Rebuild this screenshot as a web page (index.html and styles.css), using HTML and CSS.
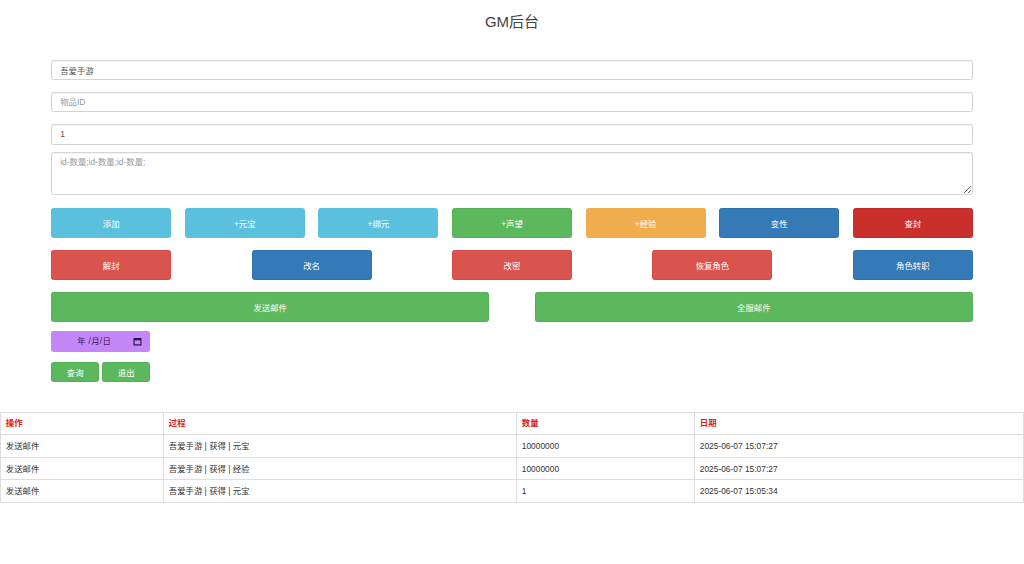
FILE: index.html
```html
<!DOCTYPE html>
<html lang="zh-CN">
<head>
<meta charset="utf-8">
<title>GM后台</title>
<link rel="stylesheet" href="styles.css">
</head>
<body>
<h3 class="title">GM后台</h3>
<div class="container">
  <input class="field" type="text" value="吾爱手游">
  <input class="field" type="text" placeholder="物品ID">
  <input class="field field-last" type="text" value="1">
  <textarea class="field area" placeholder="id-数量;id-数量;id-数量;"></textarea>

  <div class="btn-row">
    <button class="btn info">添加</button>
    <button class="btn info">+元宝</button>
    <button class="btn info">+绑元</button>
    <button class="btn success">+声望</button>
    <button class="btn warning">+经验</button>
    <button class="btn primary">变性</button>
    <button class="btn dark-danger">查封</button>
  </div>
  <div class="btn-row">
    <button class="btn danger">解封</button>
    <button class="btn primary">改名</button>
    <button class="btn danger">改密</button>
    <button class="btn danger">恢复角色</button>
    <button class="btn primary">角色转职</button>
  </div>
  <div class="btn-row">
    <button class="btn success wide">发送邮件</button>
    <button class="btn success wide">全服邮件</button>
  </div>

  <div class="date">
    <span class="date-text">年 /月/日</span>
    <svg class="cal" width="9" height="9" viewBox="0 0 9 9">
      <rect x="0.5" y="1" width="8" height="7.5" rx="0.6" fill="#2a1040"/>
      <rect x="1.6" y="3.3" width="5.8" height="4" fill="#c586f8"/>
    </svg>
  </div>

  <div class="small-row">
    <button class="btn success small">查询</button>
    <button class="btn success small">退出</button>
  </div>
</div>

<table class="log">
  <colgroup>
    <col class="c1"><col class="c2"><col class="c3"><col class="c4">
  </colgroup>
  <thead>
    <tr><th>操作</th><th>过程</th><th>数量</th><th>日期</th></tr>
  </thead>
  <tbody>
    <tr><td>发送邮件</td><td>吾爱手游 | 获得 | 元宝</td><td>10000000</td><td>2025-06-07 15:07:27</td></tr>
    <tr><td>发送邮件</td><td>吾爱手游 | 获得 | 经验</td><td>10000000</td><td>2025-06-07 15:07:27</td></tr>
    <tr><td>发送邮件</td><td>吾爱手游 | 获得 | 元宝</td><td>1</td><td>2025-06-07 15:05:34</td></tr>
  </tbody>
</table>
</body>
</html>
```

FILE: styles.css
```css
html, body {
  margin: 0;
  padding: 0;
  background: #fff;
}
body {
  font-family: "Liberation Sans", "Noto Sans CJK SC", sans-serif;
  font-size: 8.4px;
  line-height: 1.42857;
  color: #333;
}
.title {
  font-size: 15px;
  font-weight: normal;
  line-height: 16.5px;
  text-align: center;
  color: #444;
  margin: 14px 0 29px;
}
.container {
  width: 90%;
  margin: 0 auto;
}
.field {
  display: block;
  box-sizing: border-box;
  width: 100%;
  height: 20.4px;
  padding: 3.6px 8px;
  margin: 0 0 12px;
  font-family: inherit;
  font-size: 8.4px;
  line-height: 1.42857;
  color: #555;
  background: #fff;
  border: 1px solid #d4d4d4;
  border-radius: 2.4px;
  box-shadow: inset 0 1px 1px rgba(0,0,0,.05);
  outline: none;
}
.field::placeholder {
  color: #999;
}
.field-last {
  margin-bottom: 7px;
}
.area {
  height: 43px;
  resize: vertical;
  margin-bottom: 13px;
}
.btn-row {
  display: flex;
  justify-content: space-between;
  margin-bottom: 12px;
}
.btn {
  box-sizing: border-box;
  width: 120px;
  height: 30px;
  padding: 0;
  font-family: inherit;
  font-size: 8.4px;
  color: #fff;
  border: 1px solid transparent;
  border-radius: 2.4px;
  cursor: pointer;
}
.btn.wide {
  width: 438px;
}
.info { background: #5bc0de; border-color: #5bc0de; }
.success { background: #5cb85c; border-color: #55b155; }
.warning { background: #f0ad4e; border-color: #f0ad4e; }
.primary { background: #337ab7; border-color: #3073ad; }
.danger { background: #d9534f; border-color: #d64c48; }
.dark-danger { background: #c9302c; border-color: #c22d29; }

.date {
  box-sizing: border-box;
  width: 99px;
  height: 21px;
  margin-top: -3px;
  padding: 0 8px 0 26px;
  display: flex;
  align-items: center;
  justify-content: space-between;
  background: #c586f8;
  border-radius: 2.4px;
  color: #3a1a55;
  font-size: 8.4px;
}
.date-text {
  letter-spacing: 0.3px;
}
.cal {
  display: block;
}
.small-row {
  display: flex;
  gap: 3px;
  margin-top: 10px;
}
.btn.small {
  width: 48px;
  height: 20px;
}
.log {
  width: 100%;
  margin-top: 30px;
  border-collapse: collapse;
  border: 1px solid #ddd;
  table-layout: fixed;
}
.c1 { width: 163px; }
.c2 { width: 353px; }
.c3 { width: 178px; }
.log th, .log td {
  border: 1px solid #ddd;
  padding: 4.8px;
  line-height: 12px;
  text-align: left;
  font-size: 8.4px;
}
.log th {
  color: #e01b1b;
  font-weight: bold;
}
```
